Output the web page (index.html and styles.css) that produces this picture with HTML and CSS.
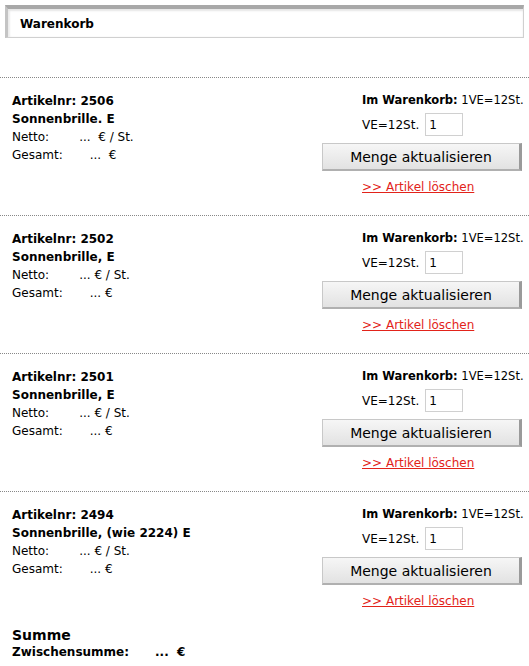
FILE: index.html
```html
<!DOCTYPE html>
<html lang="de">
<head>
    <meta charset="UTF-8">
    <title>Warenkorb</title>
    <link rel="stylesheet" href="styles.css">
</head>
<body>
    <div class="header-box">
        <h1>Warenkorb</h1>
    </div>

    <div class="cart">
        <div class="item">
            <div class="item-info">
                <div class="bold">Artikelnr: 2506</div>
                <div class="bold">Sonnenbrille. E</div>
                <div>Netto:<span class="price-net">...&nbsp; € / St.</span></div>
                <div>Gesamt:<span class="price-total">...&nbsp; €</span></div>
            </div>
            <div class="item-actions">
                <div class="in-cart"><b>Im Warenkorb:</b> 1VE=12St.</div>
                <div class="qty-row">VE=12St. <input type="text" class="qty" value="1"></div>
                <button class="update-btn">Menge aktualisieren</button>
                <a href="#" class="delete-link">&gt;&gt; Artikel löschen</a>
            </div>
        </div>

        <div class="item">
            <div class="item-info">
                <div class="bold">Artikelnr: 2502</div>
                <div class="bold">Sonnenbrille, E</div>
                <div>Netto:<span class="price-net">... € / St.</span></div>
                <div>Gesamt:<span class="price-total">... €</span></div>
            </div>
            <div class="item-actions">
                <div class="in-cart"><b>Im Warenkorb:</b> 1VE=12St.</div>
                <div class="qty-row">VE=12St. <input type="text" class="qty" value="1"></div>
                <button class="update-btn">Menge aktualisieren</button>
                <a href="#" class="delete-link">&gt;&gt; Artikel löschen</a>
            </div>
        </div>

        <div class="item">
            <div class="item-info">
                <div class="bold">Artikelnr: 2501</div>
                <div class="bold">Sonnenbrille, E</div>
                <div>Netto:<span class="price-net">... € / St.</span></div>
                <div>Gesamt:<span class="price-total">... €</span></div>
            </div>
            <div class="item-actions">
                <div class="in-cart"><b>Im Warenkorb:</b> 1VE=12St.</div>
                <div class="qty-row">VE=12St. <input type="text" class="qty" value="1"></div>
                <button class="update-btn">Menge aktualisieren</button>
                <a href="#" class="delete-link">&gt;&gt; Artikel löschen</a>
            </div>
        </div>

        <div class="item">
            <div class="item-info">
                <div class="bold">Artikelnr: 2494</div>
                <div class="bold">Sonnenbrille, (wie 2224) E</div>
                <div>Netto:<span class="price-net">... € / St.</span></div>
                <div>Gesamt:<span class="price-total">... €</span></div>
            </div>
            <div class="item-actions">
                <div class="in-cart"><b>Im Warenkorb:</b> 1VE=12St.</div>
                <div class="qty-row">VE=12St. <input type="text" class="qty" value="1"></div>
                <button class="update-btn">Menge aktualisieren</button>
                <a href="#" class="delete-link">&gt;&gt; Artikel löschen</a>
            </div>
        </div>
    </div>

    <div class="summary">
        <div class="summary-title">Summe</div>
        <div class="bold">Zwischensumme:<span class="sum-value">...&nbsp; €</span></div>
    </div>
</body>
</html>
```

FILE: styles.css
```css
body {
    font-family: 'DejaVu Sans', Verdana, sans-serif;
    font-size: 12px;
    color: #000;
    background: #fff;
    margin: 0;
    padding: 5px 5px 0 0;
}
.header-box {
    margin-left: 5px;
    height: 28px;
    border: 1px solid #d0d0d0;
    border-top: 4px solid #a8a8a8;
    border-left: 3px solid #c4c4c4;
    box-shadow: inset 0 2px 2px #e6e6e6, inset 2px 0 2px #eeeeee;
    display: flex;
    align-items: center;
}
h1 {
    font-size: 12px;
    font-weight: bold;
    margin: 2px 0 0 12px;
}
.cart {
    margin-top: 39px;
    margin-right: -5px;
}
.item {
    border-top: 1px dotted #888;
    height: 137px;
    display: flex;
    justify-content: space-between;
}
.item-info {
    padding: 14px 0 0 12px;
    line-height: 18px;
}
.bold {
    font-weight: bold;
}
.price-net {
    margin-left: 30px;
}
.price-total {
    margin-left: 27px;
}
.item-actions {
    width: 207px;
    padding-top: 14px;
    display: flex;
    flex-direction: column;
    align-items: flex-start;
}
.in-cart {
    margin-left: 40px;
    font-size: 11.5px;
    line-height: 16px;
    white-space: nowrap;
}
.qty-row {
    margin: 5px 0 0 40px;
    display: flex;
    align-items: center;
    gap: 6px;
}
.qty {
    width: 30px;
    height: 21px;
    padding: 0 3px;
    border: 1px solid #d0d0d0;
    font-family: 'DejaVu Sans', Verdana, sans-serif;
    font-size: 12px;
    box-sizing: content-box;
}
.update-btn {
    margin-top: 7px;
    width: 200px;
    height: 28px;
    font-family: 'DejaVu Sans', Verdana, sans-serif;
    font-size: 14px;
    color: #000;
    background: linear-gradient(#f6f6f6, #e2e2e2);
    border: 1px solid #c8c8c8;
    border-right: 3px solid #9a9a9a;
    border-bottom: 2px solid #b0b0b0;
    padding: 0;
}
.delete-link {
    margin: 9px 0 0 40px;
    color: #e2231a;
    font-size: 12px;
    text-decoration: underline;
}
.summary {
    margin-top: -2px;
    padding: 0 0 0 12px;
    line-height: 17px;
}
.summary-title {
    font-weight: bold;
    font-size: 14px;
}
.sum-value {
    margin-left: 26px;
}
```
